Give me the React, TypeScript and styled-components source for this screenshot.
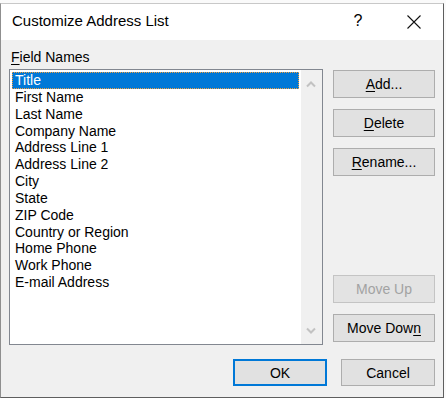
import React from "react";
import styled, { createGlobalStyle } from "styled-components";

const Global = createGlobalStyle`
  html, body { margin: 0; padding: 0; background: #ffffff; }
  body { font-family: "Liberation Sans", Arial, sans-serif; font-size: 14px; color: #000; }
  * { box-sizing: border-box; }
`;

const Page = styled.div`
  width: 446px;
  height: 398px;
  padding-top: 3px;
  background: #fafafa;
  overflow: hidden;
`;

const Dialog = styled.div`
  width: 444px;
  height: 395px;
  display: flex;
  flex-direction: column;
  border-top: 1px solid #c8c8c8;
  border-left: 1px solid #8f8f8f;
  border-right: 1px solid #5e5e5e;
  border-bottom: 1px solid #5e5e5e;
  background: #f0f0f0;
`;

const TitleBar = styled.div`
  height: 36px;
  flex: none;
  background: #ffffff;
  display: flex;
  align-items: center;
  padding-left: 11px;
  padding-bottom: 3px;
`;

const Title = styled.div`
  font-size: 15px;
  flex: 1;
`;

const HelpGlyph = styled.div`
  width: 20px;
  font-size: 16px;
  text-align: center;
  margin-right: 39px;
`;

const CloseBox = styled.div`
  width: 14px;
  height: 14px;
  margin-right: 22px;
  margin-top: 2px;
  display: flex;
`;

const Body = styled.div`
  flex: 1;
  display: flex;
  flex-direction: column;
  padding: 9px 8px 11px 8px;
`;

const Main = styled.div`
  display: flex;
  gap: 10px;
`;

const LeftCol = styled.div`
  width: 314px;
  display: flex;
  flex-direction: column;
`;

const Label = styled.div`
  line-height: 17px;
  padding-left: 2px;
  margin-bottom: 3px;
`;

const U = styled.span`
  text-decoration: underline;
  text-underline-offset: 2px;
`;

const ListBox = styled.div`
  height: 276px;
  border: 1px solid #828790;
  background: #ffffff;
  display: flex;
`;

const Items = styled.div`
  flex: 1;
  padding: 2px 2px 0 2px;
`;

const Item = styled.div<{ $selected?: boolean }>`
  height: 16.85px;
  line-height: 17px;
  padding-left: 3px;
  white-space: nowrap;
  background: ${(p) => (p.$selected ? "#0078d7" : "transparent")};
  color: ${(p) => (p.$selected ? "#ffffff" : "#000000")};
  outline: ${(p) => (p.$selected ? "1px dotted #f0a040" : "none")};
  outline-offset: -1px;
`;

const ScrollBar = styled.div`
  width: 21px;
  background: #f0f0f0;
  display: flex;
  flex-direction: column;
  justify-content: space-between;
`;

const ScrollArrow = styled.div`
  height: 28px;
  display: flex;
  align-items: center;
  justify-content: center;
  padding-right: 2px;
`;

const RightCol = styled.div`
  width: 102px;
  margin-top: 21px;
  padding-bottom: 3px;
  display: flex;
  flex-direction: column;
  justify-content: space-between;
`;

const ButtonGroup = styled.div`
  display: flex;
  flex-direction: column;
  gap: 11px;
`;

const Button = styled.div<{ $disabled?: boolean; $default?: boolean; $w?: number; $h?: number }>`
  width: ${(p) => (p.$w ? `${p.$w}px` : "100%")};
  height: ${(p) => (p.$h ? `${p.$h}px` : "28px")};
  display: flex;
  align-items: center;
  justify-content: center;
  background: ${(p) => (p.$disabled ? "#e3e3e3" : "#e1e1e1")};
  border: ${(p) =>
    p.$default ? "2px solid #0078d7" : p.$disabled ? "1px solid #c4c4c4" : "1px solid #adadad"};
  color: ${(p) => (p.$disabled ? "#a2a2a2" : "#000000")};
  white-space: nowrap;
`;

const Footer = styled.div`
  margin-top: 14px;
  display: flex;
  justify-content: flex-end;
  gap: 14px;
`;

const Chevron = ({ down }: { down?: boolean }) => (
  <svg width="10" height="7" viewBox="0 0 10 7">
    <path
      d={down ? "M1 1.5 L5 5.5 L9 1.5" : "M1 5.5 L5 1.5 L9 5.5"}
      fill="none"
      stroke="#c2c2c2"
      strokeWidth="2"
    />
  </svg>
);

const items = [
  "Title",
  "First Name",
  "Last Name",
  "Company Name",
  "Address Line 1",
  "Address Line 2",
  "City",
  "State",
  "ZIP Code",
  "Country or Region",
  "Home Phone",
  "Work Phone",
  "E-mail Address",
];

export default function App() {
  return (
    <>
      <Global />
      <Page>
        <Dialog>
          <TitleBar>
            <Title>Customize Address List</Title>
            <HelpGlyph>?</HelpGlyph>
            <CloseBox>
              <svg width="14" height="14" viewBox="0 0 14 14">
                <path d="M0.5 0.5 L13.5 13.5 M13.5 0.5 L0.5 13.5" stroke="#111" strokeWidth="1.1" />
              </svg>
            </CloseBox>
          </TitleBar>
          <Body>
            <Main>
              <LeftCol>
                <Label>
                  <U>F</U>ield Names
                </Label>
                <ListBox>
                  <Items>
                    {items.map((t, i) => (
                      <Item key={t} $selected={i === 0}>
                        {t}
                      </Item>
                    ))}
                  </Items>
                  <ScrollBar>
                    <ScrollArrow>
                      <Chevron />
                    </ScrollArrow>
                    <ScrollArrow>
                      <Chevron down />
                    </ScrollArrow>
                  </ScrollBar>
                </ListBox>
              </LeftCol>
              <RightCol>
                <ButtonGroup>
                  <Button>
                    <U>A</U>dd...
                  </Button>
                  <Button>
                    <U>D</U>elete
                  </Button>
                  <Button>
                    <U>R</U>ename...
                  </Button>
                </ButtonGroup>
                <ButtonGroup>
                  <Button $disabled>Move Up</Button>
                  <Button>
                    Move Dow<U>n</U>
                  </Button>
                </ButtonGroup>
              </RightCol>
            </Main>
            <Footer>
              <Button $default $w={94} $h={27}>
                OK
              </Button>
              <Button $w={94} $h={27}>
                Cancel
              </Button>
            </Footer>
          </Body>
        </Dialog>
      </Page>
    </>
  );
}
